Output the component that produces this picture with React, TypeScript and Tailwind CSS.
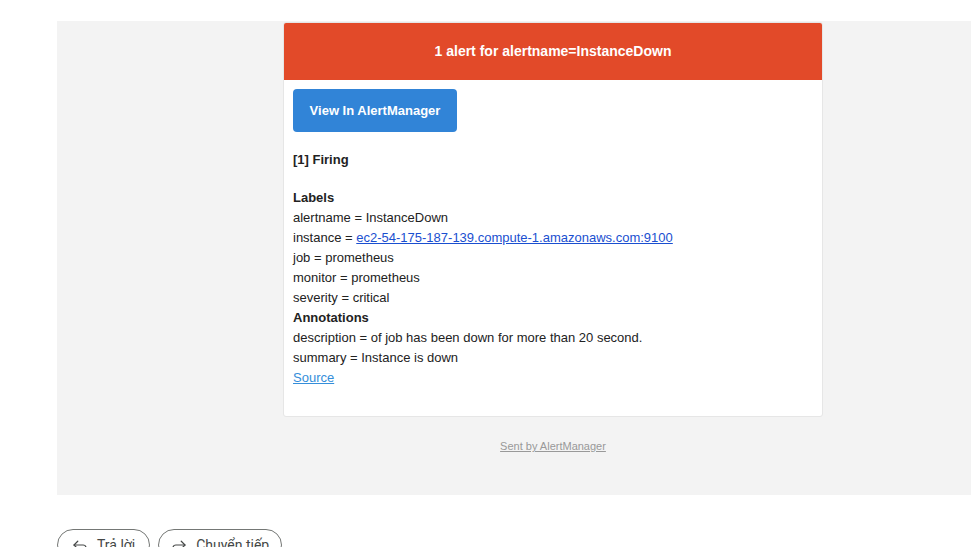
import { Reply, Forward } from "lucide-react";

const labels = [
  ["alertname", "InstanceDown"],
  ["instance", "ec2-54-175-187-139.compute-1.amazonaws.com:9100"],
  ["job", "prometheus"],
  ["monitor", "prometheus"],
  ["severity", "critical"],
];

export default function App() {
  return (
    <div className="w-[971px] h-[547px] overflow-hidden bg-white pt-[21px] pl-[57px] font-['Liberation_Sans',Arial,sans-serif]">
      {/* email body */}
      <div className="w-[992px] h-[474px] bg-[#f3f3f3] pt-[1px]">
        <div className="mx-auto w-[540px] bg-white border border-[#e6e6e6] rounded-[3px] overflow-hidden">
          <div className="h-[57px] bg-[#e24a29] flex items-center justify-center text-white text-[14px] font-bold">
            1 alert for alertname=InstanceDown
          </div>
          <div className="px-[9px] pt-[9px] pb-[28px] text-[13px] leading-[20px] text-[#222]">
            <a className="w-[164px] h-[43px] rounded-[4px] bg-[#3184d7] text-white font-bold flex items-center justify-center">
              View In AlertManager
            </a>
            <div className="mt-[18px] font-bold">[1] Firing</div>
            <div className="mt-[18px] font-bold">Labels</div>
            {labels.map(([k, v]) => (
              <div key={k}>
                {k} ={" "}
                {k === "instance" ? (
                  <a className="text-[#1a4fd0] underline">{v}</a>
                ) : (
                  v
                )}
              </div>
            ))}
            <div className="font-bold">Annotations</div>
            <div>description = of job has been down for more than 20 second.</div>
            <div>summary = Instance is down</div>
            <a className="text-[#348eda] underline">Source</a>
          </div>
        </div>
        <div className="w-[540px] mx-auto mt-[22px] text-center text-[11px] leading-[14px] text-[#999]">
          <a className="underline">Sent by AlertManager</a>
        </div>
      </div>

      {/* gmail actions */}
      <div className="mt-[34px] flex gap-2 font-['Roboto',sans-serif] text-[14px] text-[#444746]">
        <button className="h-[32px] pl-[13px] pr-[14px] flex items-center gap-[8px] rounded-full border border-[#747775]">
          <Reply size={18} strokeWidth={1.6} />
          Trả lời
        </button>
        <button className="h-[32px] pl-[11px] pr-[12px] flex items-center gap-[8px] rounded-full border border-[#747775]">
          <Forward size={18} strokeWidth={1.6} />
          Chuyển tiếp
        </button>
      </div>
    </div>
  );
}
